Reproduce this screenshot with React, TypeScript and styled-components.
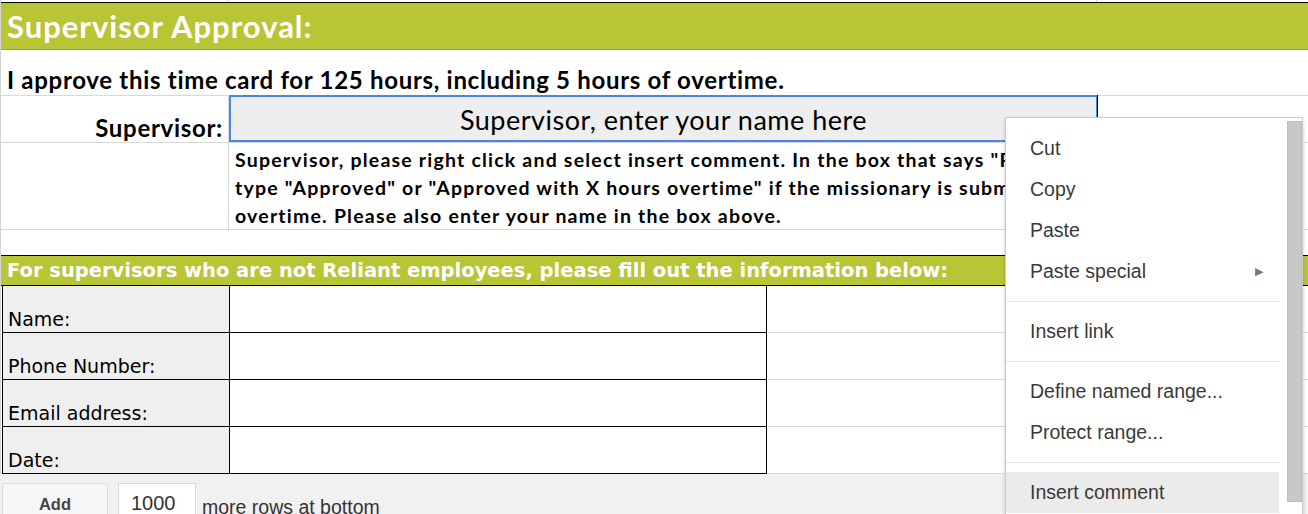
import React from "react";
import styled, { createGlobalStyle } from "styled-components";

const GlobalStyle = createGlobalStyle`
  html, body {
    margin: 0;
    padding: 0;
    background: #ffffff;
    overflow: hidden;
  }
  * {
    box-sizing: border-box;
  }
`;

const SHEET_FONT = `"Lato", "Open Sans", sans-serif`;
const FORM_FONT = `"DejaVu Sans", "Open Sans", sans-serif`;
const UI_FONT = `"Liberation Sans", Arial, sans-serif`;

const Page = styled.div`
  position: relative;
  width: 1308px;
  height: 514px;
  overflow: hidden;
  background: #f1f1f1;
`;

const Sheet = styled.div`
  display: flex;
  flex-direction: column;
  background: #ffffff;
  border-left: 1px solid #d4d4d4;
`;

const Row = styled.div<{ $h: number; $line?: string; $bg?: string }>`
  display: flex;
  height: ${(p) => p.$h}px;
  border-bottom: 1px solid ${(p) => p.$line || "#d9d9d9"};
  background: ${(p) => p.$bg || "#ffffff"};
  flex-shrink: 0;
`;

const GridCell = styled.div<{ $w?: number; $right?: string }>`
  width: ${(p) => (p.$w ? `${p.$w}px` : "auto")};
  flex: ${(p) => (p.$w ? "0 0 auto" : "1")};
  border-right: ${(p) => (p.$right ? `1px solid ${p.$right}` : "none")};
  height: 100%;
`;

const Banner = styled.div<{ $size: number; $font: string; $spacing?: number }>`
  display: flex;
  align-items: center;
  height: 100%;
  padding-left: 6px;
  color: #ffffff;
  font-family: ${(p) => p.$font};
  font-weight: 700;
  font-size: ${(p) => p.$size}px;
  letter-spacing: ${(p) => p.$spacing || 0}px;
  white-space: nowrap;
`;

const TopStrip = styled.div`
  display: flex;
  height: 2px;
  background: #ffffff;
`;

const Statement = styled.div`
  display: flex;
  align-items: flex-end;
  padding: 0 0 1px 6px;
  font-family: ${SHEET_FONT};
  font-weight: 700;
  font-size: 24px;
  letter-spacing: 0.7px;
  color: #000;
  white-space: nowrap;
  height: 100%;
`;

const LabelCell = styled.div`
  width: 228px;
  flex: 0 0 auto;
  display: flex;
  align-items: flex-end;
  justify-content: flex-end;
  padding: 0 5px 0 0;
  font-family: ${SHEET_FONT};
  font-weight: 700;
  font-size: 24px;
  letter-spacing: 0.7px;
  color: #000;
  border-right: 1px solid #d9d9d9;
`;

const NameInput = styled.div`
  width: 868px;
  flex: 0 0 auto;
  margin-top: -1px;
  height: calc(100% + 1px);
  display: flex;
  align-items: center;
  justify-content: center;
  padding-top: 1px;
  background: #eeeeee;
  border: 2px solid #4a86e8;
  border-right-width: 1px;
  box-shadow: 1px 0 0 #000;
  font-family: ${SHEET_FONT};
  font-size: 27px;
  letter-spacing: 0.5px;
  color: #000;
  white-space: nowrap;
`;

const Note = styled.div`
  flex: 1;
  padding: 3px 0 0 6px;
  font-family: ${SHEET_FONT};
  font-weight: 700;
  font-size: 19.5px;
  letter-spacing: 1.2px;
  line-height: 28px;
  color: #000;
  white-space: nowrap;
  overflow: hidden;
`;

const FormTable = styled.div`
  display: flex;
  flex-direction: column;
`;

const FormRow = styled.div`
  display: flex;
  height: 47px;
  border-bottom: 1px solid #d9d9d9;
  background: #ffffff;
`;

const FormLabel = styled.div`
  width: 228px;
  flex: 0 0 auto;
  display: flex;
  align-items: flex-end;
  padding: 0 0 1px 5px;
  margin-left: 1px;
  background: #efefef;
  border-left: 1px solid #000;
  border-right: 1px solid #000;
  border-bottom: 1px solid #000;
  margin-bottom: -1px;
  font-family: ${FORM_FONT};
  font-size: 19px;
  line-height: 24px;
  color: #000;
`;

const FormValue = styled.div`
  width: 537px;
  flex: 0 0 auto;
  border-right: 1px solid #000;
  border-bottom: 1px solid #000;
  margin-bottom: -1px;
`;

const Footer = styled.div`
  display: flex;
  align-items: flex-start;
  gap: 10px;
  padding: 9px 0 0 2px;
  background: #f1f1f1;
  flex: 1;
`;

const AddButton = styled.div`
  width: 106px;
  height: 36px;
  display: flex;
  align-items: center;
  justify-content: center;
  padding-top: 6px;
  background: #f6f6f6;
  border: 1px solid #dcdcdc;
  border-radius: 2px;
  font-family: ${UI_FONT};
  font-weight: 700;
  font-size: 16.5px;
  color: #444;
`;

const CountInput = styled.div`
  width: 78px;
  height: 36px;
  padding: 8px 0 0 12px;
  background: #ffffff;
  border: 1px solid #d9d9d9;
  font-family: ${UI_FONT};
  font-size: 20px;
  color: #333;
`;

const FooterText = styled.div`
  margin: 13px 0 0 -4px;
  font-family: ${UI_FONT};
  font-size: 19.5px;
  color: #333;
`;

const Menu = styled.div`
  position: absolute;
  left: 1005px;
  top: 117px;
  width: 298px;
  height: 420px;
  padding-top: 10px;
  background: #ffffff;
  border: 1px solid #cccccc;
  box-shadow: 0 2px 4px rgba(0, 0, 0, 0.2);
`;

const MenuList = styled.div`
  width: 273px;
  display: flex;
  flex-direction: column;
`;

const MenuItem = styled.div<{ $active?: boolean }>`
  display: flex;
  align-items: center;
  justify-content: space-between;
  height: 41px;
  padding: 0 16px 0 24px;
  background: ${(p) => (p.$active ? "#ebebeb" : "transparent")};
  font-family: ${UI_FONT};
  font-size: 19.5px;
  color: #3a3a3a;
`;

const Arrow = styled.span`
  font-size: 11px;
  color: #777;
`;

const Separator = styled.div`
  height: 1px;
  margin: 9px 0;
  background: #e5e5e5;
`;

const Scrollbar = styled.div`
  position: absolute;
  right: 0;
  top: 3px;
  width: 15px;
  height: 381px;
  background: #c8c8c8;
  border: 1px solid #bdbdbd;
`;

const formFields = ["Name:", "Phone Number:", "Email address:", "Date:"];

const noteLines = [
  'Supervisor, please right click and select insert comment. In the box that says "Reliant Approval,"',
  'type "Approved" or "Approved with X hours overtime" if the missionary is submitting',
  "overtime. Please also enter your name in the box above.",
];

export default function App() {
  return (
    <Page>
      <GlobalStyle />
      <Sheet>
        <TopStrip>
          <GridCell $w={228} $right="#d9d9d9" />
          <GridCell $w={868} $right="#d9d9d9" />
          <GridCell />
        </TopStrip>
        <Row $h={48} $bg="#b8c534" $line="#9ea72c" style={{ borderTop: "1px solid #000" }}>
          <Banner $size={31} $spacing={1} $font={SHEET_FONT}>
            Supervisor Approval:
          </Banner>
        </Row>
        <Row $h={46}>
          <Statement>
            I approve this time card for 125 hours, including 5 hours of overtime.
          </Statement>
        </Row>
        <Row $h={47}>
          <LabelCell>Supervisor:</LabelCell>
          <NameInput>Supervisor, enter your name here</NameInput>
          <GridCell />
        </Row>
        <Row $h={87}>
          <GridCell $w={228} $right="#d9d9d9" />
          <Note>
            {noteLines.map((line) => (
              <div key={line}>{line}</div>
            ))}
          </Note>
        </Row>
        <Row $h={26} $line="#000" />
        <Row $h={30} $bg="#b8c534" $line="#000">
          <Banner $size={19.5} $font={FORM_FONT}>
            For supervisors who are not Reliant employees, please fill out the information below:
          </Banner>
        </Row>
        <FormTable>
          {formFields.map((f) => (
            <FormRow key={f}>
              <FormLabel>{f}</FormLabel>
              <FormValue />
            </FormRow>
          ))}
        </FormTable>
      </Sheet>
      <Footer>
        <AddButton>Add</AddButton>
        <CountInput>1000</CountInput>
        <FooterText>more rows at bottom</FooterText>
      </Footer>
      <Menu>
        <MenuList>
          <MenuItem>Cut</MenuItem>
          <MenuItem>Copy</MenuItem>
          <MenuItem>Paste</MenuItem>
          <MenuItem>
            Paste special <Arrow>▶</Arrow>
          </MenuItem>
          <Separator />
          <MenuItem>Insert link</MenuItem>
          <Separator />
          <MenuItem>Define named range...</MenuItem>
          <MenuItem>Protect range...</MenuItem>
          <Separator />
          <MenuItem $active>Insert comment</MenuItem>
        </MenuList>
        <Scrollbar />
      </Menu>
    </Page>
  );
}
